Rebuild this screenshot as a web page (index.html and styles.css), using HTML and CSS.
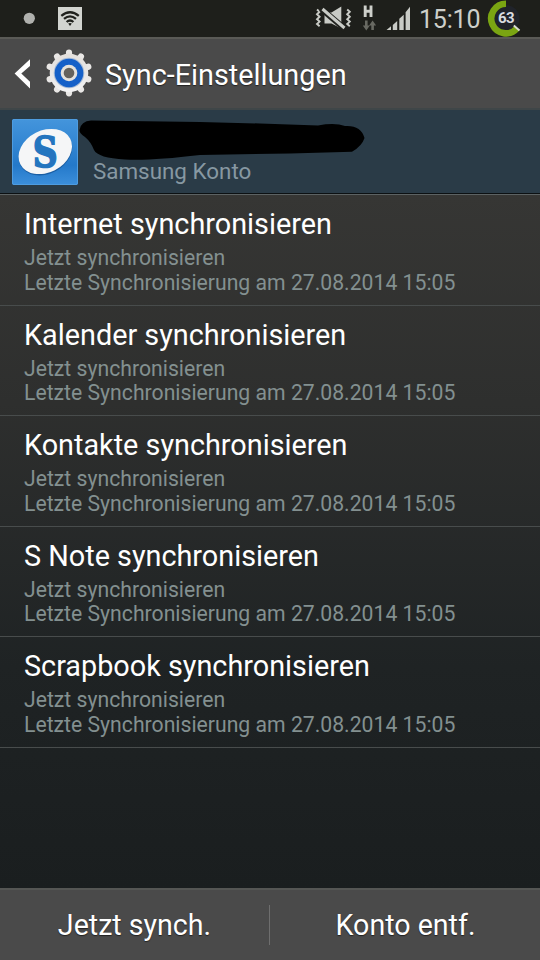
FILE: index.html
```html
<!DOCTYPE html>
<html lang="de">
<head>
  <meta charset="UTF-8" />
  <title>Sync-Einstellungen</title>
  <meta name="viewport" content="width=device-width, initial-scale=1.0" />
  <link rel="stylesheet" href="styles.css">
</head>
<body>
  <!-- Status bar -->
  <div class="status">
    <svg class="status-left" width="90" height="37" viewBox="0 0 90 37">
      <circle cx="29.3" cy="18.3" r="5.6" fill="#b0b1ae"/>
      <rect x="58" y="7" width="24" height="23" fill="#d2d4d0"/>
      <g fill="none" stroke="#20211d" stroke-width="2.3">
        <path d="M61.3 15.8Q70 8.6 78.8 15.8"/>
        <path d="M64 18.9Q70 13.8 76 18.9"/>
        <path d="M66.6 22Q70 19 73.4 22"/>
      </g>
      <path d="M68.2 23.6Q70 22.4 71.8 23.6L70 26z" fill="#20211d"/>
    </svg>
    <svg class="status-icons" width="100" height="37" viewBox="312 0 100 37">
      <!-- muted, vibrating -->
      <g fill="none" stroke="#c9cbc6" stroke-width="1.9">
        <path d="M317 9.5l2.6 2.3-2.6 2.5 2.6 2.4-2.6 2.5 2.6 2.4-2.6 2.4 2.6 2.2"/>
        <path d="M347.2 9.5l2.6 2.3-2.6 2.5 2.6 2.4-2.6 2.5 2.6 2.4-2.6 2.4 2.6 2.2"/>
      </g>
      <path d="M324.5 12.500h7L341.300 6.500V28.500L331.500 23.500h-7z" fill="#c9cbc6"/>
      <path d="M321 8.500L345 29" stroke="#20211d" stroke-width="6"/>
      <path d="M322.500 9L344.500 28" stroke="#c9cbc6" stroke-width="3"/>
      <!-- H data -->
      <path d="M365.200 5.500v11.500M371 5.500v11.500M365 11.200h6" stroke="#cdcfca" stroke-width="2.900" fill="none"/>
      <path d="M365 20.500h2.600v5h2.200l-3.500 5-3.500-5h2.200zM371.300 30h2.600v-4.500h2.200l-3.500-5-3.500 5h2.200z" fill="#686962"/>
      <!-- signal -->
      <path d="M386.500 30l4.500-3.700V30zM392.800 25l4.400-4v9h-4.400zM399.300 18.800l4.400-4V30h-4.400zM405.600 12.300l4.400-5.500V30h-4.400z" fill="#c9cbc6"/>
    </svg>
    <span class="clock">15:10</span>
    <div class="battery">
      <svg width="38" height="37" viewBox="487 0 38 37">
        <circle cx="506" cy="18.500" r="13.500" fill="#20232a"/>
        <path d="M506 3.700A14.800 14.800 0 1 0 517 28.400" fill="none" stroke="#7aa512" stroke-width="6.600"/>
        <path d="M513.800 25.500l5.700 5" stroke="#d8dbd0" stroke-width="2"/>
      </svg>
      <span class="battery-level">63</span>
    </div>
  </div>

  <!-- Action bar -->
  <header>
    <svg class="back" width="18" height="30" viewBox="0 0 18 30">
      <path d="M16 .3V7L7.300 14.500 16 22.800v6.700L.6 14.500z" fill="#fff"/>
    </svg>
    <svg class="gear" width="48" height="48" viewBox="-24 -24 48 48">
      <defs>
        <linearGradient id="metal" x1="0" y1="0" x2="0" y2="1">
          <stop offset="0" stop-color="#e4e0dc"/>
          <stop offset=".6" stop-color="#e9e8e8"/>
          <stop offset="1" stop-color="#f4f4f4"/>
        </linearGradient>
      </defs>
      <g stroke="#e9e7e5" stroke-width="6.200" stroke-linecap="round">
        <path d="M0-20.300V20.300"/>
        <path d="M0-20.300V20.300" transform="rotate(36)"/>
        <path d="M0-20.300V20.300" transform="rotate(72)"/>
        <path d="M0-20.300V20.300" transform="rotate(108)"/>
        <path d="M0-20.300V20.300" transform="rotate(144)"/>
      </g>
      <circle r="19.300" fill="url(#metal)"/>
      <circle r="15.300" fill="#a9bcd6"/>
      <circle r="14.300" fill="#1560c8"/>
      <circle r="8.300" fill="#e5e2dc"/>
      <circle r="5.300" fill="#65625c"/>
    </svg>
    <h1>Sync-Einstellungen</h1>
  </header>

  <!-- Account -->
  <div class="account">
    <svg class="account-icon" width="66" height="66" viewBox="0 0 66 66">
      <defs>
        <linearGradient id="blue" x1="0" y1="0" x2="0" y2="1">
          <stop offset="0" stop-color="#4495dc"/>
          <stop offset=".7" stop-color="#2479ca"/>
          <stop offset="1" stop-color="#3c8fdb"/>
        </linearGradient>
      </defs>
      <rect width="66" height="66" rx="2" fill="url(#blue)"/>
      <rect x=".5" y=".5" width="65" height="65" rx="1.500" fill="none" stroke="#4e9ce0"/>
      <ellipse cx="33.500" cy="33.800" rx="28" ry="21" transform="rotate(-27 33.500 33.800)" fill="#1b5fa4"/>
      <ellipse cx="33.300" cy="32.500" rx="28" ry="21" transform="rotate(-27 33.300 32.500)" fill="#f5f6f7"/>
      <text class="account-s" x="20.800" y="48" textLength="25" lengthAdjust="spacingAndGlyphs">S</text>
    </svg>
    <div class="account-text">
      <svg class="redacted" width="288" height="42" viewBox="78 119 288 42">
        <path d="M79.500 130Q81 121 91 120.500L200 122 260 123.500 318 125.500Q335 122.500 345 126 361 125 364.500 138 362 146 352 151.800L290 153.500 200 155Q150 161 125 159.500 98 158 94 150 91 142 85 137 79 133 79.500 130z"/>
      </svg>
      <div class="account-type">Samsung Konto</div>
    </div>
  </div>

  <!-- Sync items -->
  <div class="list">
    <div class="item">
      <h2>Internet synchronisieren</h2>
      <p>Jetzt synchronisieren</p>
      <p>Letzte Synchronisierung am 27.08.2014 15:05</p>
    </div>
    <div class="item">
      <h2>Kalender synchronisieren</h2>
      <p>Jetzt synchronisieren</p>
      <p>Letzte Synchronisierung am 27.08.2014 15:05</p>
    </div>
    <div class="item">
      <h2>Kontakte synchronisieren</h2>
      <p>Jetzt synchronisieren</p>
      <p>Letzte Synchronisierung am 27.08.2014 15:05</p>
    </div>
    <div class="item">
      <h2>S Note synchronisieren</h2>
      <p>Jetzt synchronisieren</p>
      <p>Letzte Synchronisierung am 27.08.2014 15:05</p>
    </div>
    <div class="item">
      <h2>Scrapbook synchronisieren</h2>
      <p>Jetzt synchronisieren</p>
      <p>Letzte Synchronisierung am 27.08.2014 15:05</p>
    </div>
  </div>

  <footer>
    <div class="action">Jetzt synch.</div>
    <div class="divider"></div>
    <div class="action">Konto entf.</div>
  </footer>
</body>
</html>
```

FILE: styles.css
```css
* {
  box-sizing: border-box;
}
body {
  display: flex;
  flex-direction: column;
  width: 540px;
  height: 960px;
  margin: 0;
  overflow: hidden;
  font-family: Roboto, sans-serif;
  color: #fff;
  background: #1a1e1f;
}
svg {
  display: block;
  flex: none;
}
.status {
  display: flex;
  height: 37px;
  background: #1e1f1b;
}
.status-icons {
  margin-left: 222px;
}
.clock {
  width: 67px;
  margin-left: 7px;
  font-size: 25px;
  line-height: 39px;
  letter-spacing: -0.2px;
  color: #cdcfca;
}
.battery {
  position: relative;
  margin-left: 1px;
}
.battery-level {
  position: absolute;
  inset: 0;
  font-size: 15px;
  font-weight: bold;
  line-height: 37px;
  letter-spacing: -0.5px;
  text-align: center;
  color: #d8dbe0;
}
header {
  display: flex;
  align-items: center;
  height: 73px;
  padding-left: 14px;
  border-top: 2px solid #5a5a56;
  border-bottom: 2px solid #3f4648;
  background: #4a4a4a;
}
.gear {
  margin: -2px 0 0 13px;
}
h1 {
  margin: 3px 0 0 12px;
  font-size: 28.8px;
  font-weight: normal;
  line-height: 32px;
  white-space: nowrap;
  text-shadow: 0 1px 1px #222;
}
.account {
  display: flex;
  height: 84px;
  padding: 9px 0 0 12px;
  border-bottom: 1px solid #0c1012;
  background: #2a3b47;
}
.account-s {
  font-family: "DejaVu Serif", serif;
  font-size: 43px;
  font-weight: bold;
  fill: #2475bf;
  stroke: #2475bf;
  stroke-width: 1.6;
}
.account-type {
  margin-left: 15px;
  font-size: 22.4px;
  line-height: 26px;
  margin-top: -3px;
  color: #8798a2;
}
.list {
  flex: 1;
  border-top: 1px solid #5c6263;
  background: linear-gradient(#363634, #2e2f2e 30%, #1f2324 68%, #1a1e1f);
}
.item {
  height: 110.5px;
  padding: 11px 24px 0;
  border-bottom: 1px solid #484c4c;
}
h2 {
  margin: 0 0 4px;
  font-size: 28.8px;
  font-weight: normal;
  line-height: 36px;
  white-space: nowrap;
}
p {
  margin: 0;
  font-size: 21.2px;
  line-height: 24.5px;
  white-space: nowrap;
  color: #839090;
}
footer {
  display: flex;
  align-items: center;
  height: 72px;
  border-top: 2px solid #555654;
  background: #4a4a4a;
}
.action {
  flex: 1;
  font-size: 28.6px;
  line-height: 36px;
  text-align: center;
  text-shadow: 0 1px 1px #222;
}
.divider {
  width: 1px;
  height: 40px;
  margin-right: 1px;
  background: #6e6e6e;
}
```
